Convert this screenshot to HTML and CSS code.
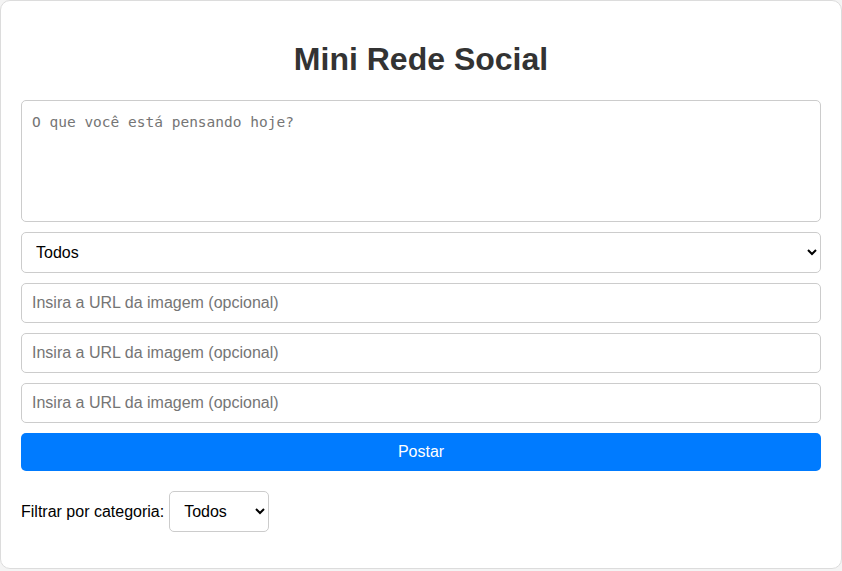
FILE: index.html
```html
<!DOCTYPE html>
<html lang="pt-BR">
<head>
<meta charset="UTF-8">
<title>Mini Rede Social</title>
<link rel="stylesheet" href="styles.css">
</head>
<body>
<div class="container">
  <h1 class="title">Mini Rede Social</h1>
  <textarea class="post-text" placeholder="O que você está pensando hoje?"></textarea>
  <select class="field select-main">
    <option>Todos</option>
  </select>
  <input class="field input" type="text" placeholder="Insira a URL da imagem (opcional)">
  <input class="field input" type="text" placeholder="Insira a URL da imagem (opcional)">
  <input class="field input" type="text" placeholder="Insira a URL da imagem (opcional)">
  <button class="post-btn">Postar</button>
  <div class="filter">
    <label class="filter-label">Filtrar por categoria:</label>
    <select class="filter-select">
      <option>Todos</option>
    </select>
  </div>
</div>
</body>
</html>
```

FILE: styles.css
```css
html, body {
  margin: 0;
  padding: 0;
}
body {
  background: #f4f4f4;
  font-family: "Liberation Sans", Arial, sans-serif;
  color: #000;
}
.container {
  box-sizing: border-box;
  width: 842px;
  height: 569px;
  margin: 0 auto;
  padding: 20px 20px 0;
  background: #fff;
  border: 1px solid #dcdcdc;
  border-radius: 10px;
  display: flex;
  flex-direction: column;
}
.title {
  margin: 20px 0 22px;
  font-size: 32px;
  line-height: 37px;
  font-weight: bold;
  text-align: center;
  color: #333;
}
.post-text {
  box-sizing: border-box;
  width: 100%;
  height: 122px;
  margin: 0 0 10px;
  padding: 11px 10px 10px;
  border: 1px solid #ccc;
  border-radius: 5px;
  font-family: "DejaVu Sans Mono", monospace;
  font-size: 14.5px;
  line-height: 20px;
  resize: none;
  outline: none;
}
.post-text::placeholder,
.input::placeholder {
  color: #757575;
}
.field {
  box-sizing: border-box;
  width: 100%;
  margin: 0 0 10px;
  padding: 0 10px;
  border: 1px solid #ccc;
  border-radius: 5px;
  background: #fff;
  font-family: "Liberation Sans", Arial, sans-serif;
  font-size: 16px;
  color: #000;
  outline: none;
}
.select-main {
  height: 41px;
}
.input {
  height: 40px;
}
.post-btn {
  box-sizing: border-box;
  width: 100%;
  height: 38px;
  margin: 0;
  border: none;
  border-radius: 5px;
  background: #007bff;
  color: #fff;
  font-family: "Liberation Sans", Arial, sans-serif;
  font-size: 16px;
}
.filter {
  display: flex;
  align-items: center;
  gap: 5px;
  margin-top: 20px;
}
.filter-label {
  font-size: 16px;
}
.filter-select {
  box-sizing: border-box;
  width: 100px;
  height: 41px;
  padding: 0 10px;
  border: 1px solid #ccc;
  border-radius: 5px;
  background: #fff;
  font-family: "Liberation Sans", Arial, sans-serif;
  font-size: 16px;
  color: #000;
}
```
